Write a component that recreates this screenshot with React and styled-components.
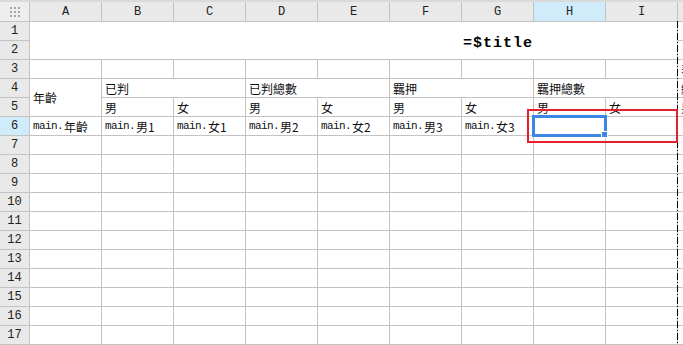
import React from "react";
import styled, { createGlobalStyle } from "styled-components";

const GlobalStyle = createGlobalStyle`
  html, body {
    margin: 0;
    padding: 0;
    background: #fff;
    overflow: hidden;
  }
`;

const COLUMNS = ["A", "B", "C", "D", "E", "F", "G", "H", "I", ""];
const ROW_COUNT = 17;

// merged ranges: [row, col, rowSpan, colSpan, text, kind]
const merges = [
  { row: 1, col: 1, rowSpan: 2, colSpan: 9, text: "=$title", kind: "title" },
  { row: 4, col: 1, rowSpan: 2, colSpan: 1, text: "年齡" },
  { row: 4, col: 2, rowSpan: 1, colSpan: 2, text: "已判" },
  { row: 4, col: 4, rowSpan: 1, colSpan: 2, text: "已判總數" },
  { row: 4, col: 6, rowSpan: 1, colSpan: 2, text: "羈押" },
  { row: 4, col: 8, rowSpan: 1, colSpan: 2, text: "羈押總數" },
];

const values = {
  "3,10": "表",
  "4,10": "總",
  "5,2": "男",
  "5,3": "女",
  "5,4": "男",
  "5,5": "女",
  "5,6": "男",
  "5,7": "女",
  "5,8": "男",
  "5,9": "女",
  "5,10": "男",
  "6,1": "main.年齡",
  "6,2": "main.男1",
  "6,3": "main.女1",
  "6,4": "main.男2",
  "6,5": "main.女2",
  "6,6": "main.男3",
  "6,7": "main.女3",
};

const ACTIVE_ROW = 6;
const ACTIVE_COL = 8;

const Page = styled.div`
  position: relative;
  width: 683px;
  height: 345px;
  overflow: hidden;
  background: #fff;
`;

const TopStrip = styled.div`
  height: 2px;
  background: #dadada;
`;

const Grid = styled.div`
  display: grid;
  grid-template-columns: 29px repeat(9, 71px) 40px;
  grid-template-rows: 19px repeat(${ROW_COUNT}, 18px);
  gap: 1px;
  background: #c3c3c3;
  padding-bottom: 1px;
`;

const HeaderCell = styled.div`
  grid-row: ${({ $row }) => $row};
  grid-column: ${({ $col }) => $col};
  display: flex;
  align-items: center;
  justify-content: center;
  background: ${({ $active }) => ($active ? "#d0ebf9" : "#e9e9e9")};
  color: #222;
  font-family: "Liberation Mono", "DejaVu Sans Mono", monospace;
  font-size: 12px;
`;

const Corner = styled(HeaderCell)`
  background: #eeeeee;
`;

const Cell = styled.div`
  grid-row: ${({ $row }) => $row} / span ${({ $rowSpan }) => $rowSpan || 1};
  grid-column: ${({ $col }) => $col} / span ${({ $colSpan }) => $colSpan || 1};
  display: flex;
  align-items: center;
  padding-left: 3px;
  background: #fff;
  color: #111;
  font-family: "Noto Sans CJK TC", "Noto Sans CJK SC", sans-serif;
  font-size: 12px;
  white-space: nowrap;
  overflow: hidden;
`;

const Mono = styled.span`
  font-family: "Liberation Mono", monospace;
  font-size: 11px;
  letter-spacing: -0.6px;
  margin-right: 1px;
`;

const TitleCell = styled(Cell)`
  padding-left: 433px;
  padding-top: 5px;
  font-family: "Liberation Mono", "DejaVu Sans Mono", monospace;
  font-weight: bold;
  font-size: 15px;
  letter-spacing: 1px;
  color: #000;
`;

const GripIcon = styled.svg`
  width: 10px;
  height: 10px;
  fill: #a6a6a6;
`;

const Selection = styled.div`
  position: absolute;
  left: 532px;
  top: 115px;
  width: 75px;
  height: 22px;
  box-sizing: border-box;
  border: 3px solid #3c87e6;
`;

const Handle = styled.div`
  position: absolute;
  right: -4px;
  bottom: -4px;
  width: 5px;
  height: 5px;
  background: #3c87e6;
  border: 1px solid #fff;
`;

const Highlight = styled.div`
  position: absolute;
  left: 527px;
  top: 109px;
  width: 151px;
  height: 34px;
  box-sizing: border-box;
  border: 2px solid #e3202b;
`;

const PageBreak = styled.div`
  position: absolute;
  left: 677px;
  top: 21px;
  bottom: 0;
  width: 1px;
  background: repeating-linear-gradient(
    to bottom,
    #000 0 7px,
    transparent 7px 9px,
    #000 9px 10px,
    transparent 10px 12px
  );
`;

function renderText(text) {
  const idx = text.indexOf(".");
  if (idx === -1) return text;
  return (
    <>
      <Mono>{text.slice(0, idx + 1)}</Mono>
      {text.slice(idx + 1)}
    </>
  );
}

function isCovered(row, col) {
  return merges.some(
    (m) =>
      row >= m.row &&
      row < m.row + m.rowSpan &&
      col >= m.col &&
      col < m.col + m.colSpan
  );
}

function App() {
  const rows = Array.from({ length: ROW_COUNT }, (_, i) => i + 1);

  return (
    <Page>
      <GlobalStyle />
      <TopStrip />
      <Grid>
        <Corner $row={1} $col={1}>
          <GripIcon viewBox="0 0 10 10">
            {[0, 4, 8].map((y) =>
              [0, 4, 8].map((x) => (
                <rect key={`${x}-${y}`} x={x} y={y} width="2" height="2" />
              ))
            )}
          </GripIcon>
        </Corner>
        {COLUMNS.map((name, i) => (
          <HeaderCell key={`h${i}`} $row={1} $col={i + 2} $active={i + 1 === ACTIVE_COL}>
            {name}
          </HeaderCell>
        ))}

        {rows.map((r) => (
          <React.Fragment key={`r${r}`}>
            <HeaderCell $row={r + 1} $col={1} $active={r === ACTIVE_ROW}>
              {r}
            </HeaderCell>
            {COLUMNS.map((_, i) => {
              const c = i + 1;
              if (isCovered(r, c)) return null;
              const text = values[`${r},${c}`];
              return (
                <Cell key={`c${r}-${c}`} $row={r + 1} $col={c + 1}>
                  {text ? renderText(text) : null}
                </Cell>
              );
            })}
          </React.Fragment>
        ))}

        {merges.map((m) =>
          m.kind === "title" ? (
            <TitleCell
              key="title"
              $row={m.row + 1}
              $col={m.col + 1}
              $rowSpan={m.rowSpan}
              $colSpan={m.colSpan}
            >
              {m.text}
            </TitleCell>
          ) : (
            <Cell
              key={`m${m.row}-${m.col}`}
              $row={m.row + 1}
              $col={m.col + 1}
              $rowSpan={m.rowSpan}
              $colSpan={m.colSpan}
            >
              {m.text}
            </Cell>
          )
        )}
      </Grid>

      <PageBreak />
      <Highlight />
      <Selection>
        <Handle />
      </Selection>
    </Page>
  );
}

export default App;
